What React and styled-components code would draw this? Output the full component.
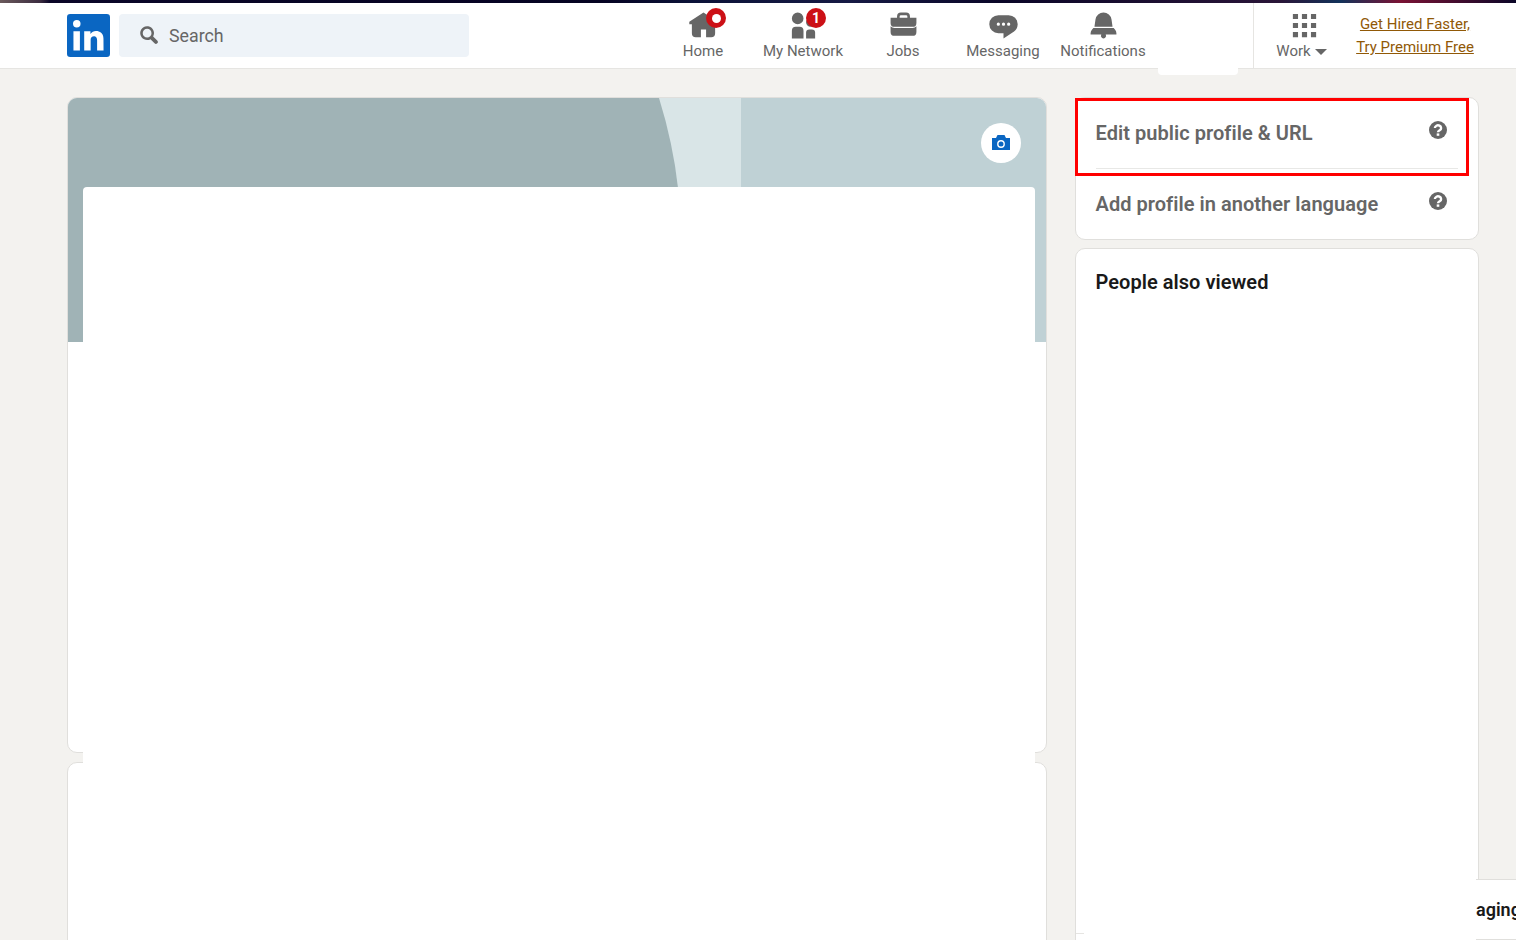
import styled, { createGlobalStyle } from "styled-components";

const GlobalStyle = createGlobalStyle`
  html, body {
    margin: 0;
    height: 940px;
    overflow: hidden;
    background: #f3f2ef;
    font-family: Roboto, "Liberation Sans", sans-serif;
  }
`;

const TopStrip = styled.div`
  height: 3px;
  background: linear-gradient(
    90deg,
    #6b5a5c 0,
    #3c2c40 40px,
    #0a0628 50px,
    #050322 600px,
    #0b1238 690px,
    #161a44 850px,
    #0a0628 1000px,
    #2a1538 1280px,
    #12325a 1340px,
    #7a1234 1400px,
    #0a0628 1516px
  );
`;

const Header = styled.header`
  position: relative;
  display: flex;
  align-items: stretch;
  height: 65px;
  padding-left: 67px;
  background: #fff;
  border-bottom: 1px solid #e6e5e2;
`;

const Logo = styled.svg`
  align-self: center;
  width: 43px;
  height: 43px;
  margin-bottom: 1px;
  fill: #0a66c2;
`;

const SearchBox = styled.div`
  display: flex;
  align-items: center;
  gap: 10px;
  align-self: center;
  box-sizing: border-box;
  width: 350px;
  height: 43px;
  margin: 0 0 1px 9px;
  padding: 1px 0 0 20px;
  background: #eef3f8;
  border-radius: 4px;
  color: #666;
  font-size: 17.8px;
`;

const SearchIcon = styled.svg`
  width: 20px;
  height: 20px;
  margin-top: -1px;
  fill: #666;
`;

const Nav = styled.nav`
  display: flex;
  margin-left: 184px;
`;

const NavItem = styled.div`
  position: relative;
  display: flex;
  flex-direction: column;
  align-items: center;
  width: 100px;
  padding-top: 7px;
  color: #666;
  font-size: 15px;
  line-height: 20px;
  white-space: nowrap;
`;

const NavIcon = styled.svg`
  display: block;
  width: 31px;
  height: 31px;
  fill: #666;
`;

const Badge = styled.span`
  position: absolute;
  top: 5px;
  left: 53px;
  display: flex;
  align-items: center;
  justify-content: center;
  width: 20px;
  height: 20px;
  border-radius: 50%;
  background: #cc1016;
  color: #fff;
  font-size: 14px;
  font-weight: 700;
  line-height: 20px;
`;

const BadgeDot = styled.span`
  width: 9px;
  height: 9px;
  border-radius: 50%;
  background: #fff;
`;

const ActiveTab = styled.div`
  position: absolute;
  left: 1158px;
  top: 60px;
  width: 80px;
  height: 12px;
  background: #fff;
  border-radius: 0 0 4px 4px;
`;

const WorkArea = styled.div`
  display: flex;
  margin-left: 100px;
  border-left: 1px solid #e6e5e2;
`;

const WorkLabel = styled.span`
  display: flex;
  align-items: center;
  gap: 4px;
  margin-left: -5px;
`;

const Caret = styled.span`
  width: 0;
  height: 0;
  margin-top: 2px;
  border-left: 6px solid transparent;
  border-right: 6px solid transparent;
  border-top: 6px solid #666;
`;

const Premium = styled.a`
  display: flex;
  flex-direction: column;
  align-items: center;
  gap: 3px;
  width: 122px;
  padding-top: 11px;
  color: #915907;
  font-size: 15px;
  line-height: 20px;
  text-decoration: underline;
  white-space: nowrap;
`;

const Main = styled.main`
  display: grid;
  grid-template-columns: 980px 404px;
  column-gap: 28px;
  padding: 28px 0 0 67px;
`;

const Column = styled.div`
  display: flex;
  flex-direction: column;
  gap: 8px;
`;

const Card = styled.section`
  position: relative;
  box-sizing: border-box;
  height: ${(props) => props.$height}px;
  background: #fff;
  border: 1px solid #e0dfdc;
  border-radius: ${(props) => (props.$open ? "10px 10px 0 0" : "10px")};
`;

const LeftColumn = styled(Column)`
  gap: 9px;
`;

const Banner = styled.svg`
  display: block;
  width: 978px;
  height: 244px;
  border-radius: 9px 9px 0 0;
`;

const CameraButton = styled.div`
  position: absolute;
  top: 25px;
  right: 25px;
  display: flex;
  align-items: center;
  justify-content: center;
  width: 40px;
  height: 40px;
  border-radius: 50%;
  background: #fff;
`;

const CameraIcon = styled.svg`
  width: 20px;
  height: 20px;
`;

const Blank = styled.div`
  position: absolute;
  top: 89px;
  left: 15px;
  width: 952px;
  height: 590px;
  background: #fff;
  border-radius: 4px 4px 0 0;
  z-index: 1;
`;

const ProfileRow = styled.div`
  display: flex;
  justify-content: space-between;
  box-sizing: border-box;
  height: ${(props) => props.$height}px;
  margin: 0 20px 0 19.5px;
  padding-top: ${(props) => props.$top}px;
  border-bottom: ${(props) => (props.$divider ? "1px solid #e8e8e6" : "none")};
  color: #666;
  font-size: 20px;
  font-weight: 600;
  letter-spacing: 0.04px;
  line-height: 26px;
`;

const HelpIcon = styled.svg`
  width: 18px;
  height: 18px;
  margin: 1px 11px 0 0;
`;

const Highlight = styled.div`
  position: absolute;
  top: 0;
  left: -1px;
  box-sizing: border-box;
  width: 394px;
  height: 78px;
  border: 3px solid #ff0000;
`;

const PeopleCard = styled(Card)`
  padding: 20px 19.5px;
  color: #191919;
  font-size: 20px;
  font-weight: 600;
  letter-spacing: 0.04px;
  line-height: 26px;

  &::after {
    content: "";
    position: absolute;
    left: 0;
    top: 684px;
    width: 8px;
    height: 1px;
    background: #e6e5e2;
  }
`;

const MessagingTab = styled.div`
  position: fixed;
  top: 879px;
  left: 1476px;
  box-sizing: border-box;
  width: 40px;
  height: 61px;
  overflow: hidden;
  background: #fff;
  border-top: 1px solid #e0dfdc;
  border-bottom: 1px solid #e0dfdc;
  color: #191919;
  font-size: 18px;
  font-weight: 600;
  line-height: 59px;
  white-space: nowrap;
`;

const navLinks = [
  {
    label: "Home",
    path: "M23 9v2h-2v7a3 3 0 01-3 3h-4v-6h-4v6H6a3 3 0 01-3-3v-7H1V9l11-7 5 3.18V2h3v5.09z",
    badge: "dot",
  },
  {
    label: "My Network",
    path: "M12 16v6H3v-6a3 3 0 013-3h3a3 3 0 013 3zm5.5-3A3.5 3.5 0 1014 9.5a3.5 3.5 0 003.5 3.5zm1 2h-2a2.5 2.5 0 00-2.5 2.5V22h7v-4.5a2.5 2.5 0 00-2.5-2.5zM7.5 2A4.5 4.5 0 1012 6.5 4.49 4.49 0 007.5 2z",
    badge: "1",
  },
  {
    label: "Jobs",
    path: "M17 6V5a3 3 0 00-3-3h-4a3 3 0 00-3 3v1H2v4a3 3 0 003 3h14a3 3 0 003-3V6zM9 5a1 1 0 011-1h4a1 1 0 011 1v1H9zm10 9a4 4 0 003-1.38V17a3 3 0 01-3 3H5a3 3 0 01-3-3v-4.38A4 4 0 005 14z",
  },
  {
    label: "Messaging",
    path: "M16 4H8a7 7 0 000 14h4v4l8.16-5.39A6.78 6.78 0 0023 11a7 7 0 00-7-7zm-8 8.25A1.25 1.25 0 119.25 11 1.25 1.25 0 018 12.25zm4 0A1.25 1.25 0 1113.25 11 1.25 1.25 0 0112 12.25zm4 0A1.25 1.25 0 1117.25 11 1.25 1.25 0 0116 12.25z",
  },
  {
    label: "Notifications",
    path: "M22 19h-8.28a2 2 0 11-3.44 0H2v-1a4.52 4.52 0 011.17-2.83l1-1.17h15.7l1 1.17A4.42 4.42 0 0122 18zM18.21 7.44A6.27 6.27 0 0012 2a6.27 6.27 0 00-6.21 5.44L5 13h14z",
  },
];

const Help = () => (
  <HelpIcon viewBox="0 0 18 18">
    <circle cx="9" cy="9" r="9" fill="#666" />
    <path
      d="M5.9 7a3.1 2.7 0 1 1 4.8 2.3c-1 .6-1.7 1-1.7 2"
      fill="none"
      stroke="#fff"
      strokeWidth="2.4"
    />
    <rect x="7.7" y="12.4" width="2.6" height="2.4" fill="#fff" />
  </HelpIcon>
);

const App = () => {
  return (
    <>
      <GlobalStyle />
      <TopStrip />
      <Header>
        <Logo viewBox="2 2 20 20">
          <path d="M20.5 2h-17A1.5 1.5 0 002 3.5v17A1.5 1.5 0 003.5 22h17a1.5 1.5 0 001.5-1.5v-17A1.5 1.5 0 0020.5 2zM8 19H5v-9h3zM6.5 8.25A1.75 1.75 0 118.3 6.5a1.78 1.78 0 01-1.8 1.75zM19 19h-3v-4.74c0-1.42-.6-1.93-1.38-1.93A1.74 1.74 0 0013 14.19a.66.66 0 000 .14V19h-3v-9h2.9v1.3a3.11 3.11 0 012.7-1.4c1.55 0 3.36.86 3.36 3.66z" />
        </Logo>
        <SearchBox>
          <SearchIcon viewBox="0 0 16 16">
            <path d="M14.56 12.44L11.3 9.18a5.51 5.51 0 10-2.12 2.12l3.26 3.26a1.5 1.5 0 102.12-2.12zM3 6.5A3.5 3.5 0 116.5 10 3.5 3.5 0 013 6.5z" />
          </SearchIcon>
          Search
        </SearchBox>
        <Nav>
          {navLinks.map((link) => (
            <NavItem key={link.label}>
              <NavIcon viewBox="0 0 24 24">
                <path d={link.path} />
              </NavIcon>
              {link.label}
              {link.badge && (
                <Badge>{link.badge === "dot" ? <BadgeDot /> : link.badge}</Badge>
              )}
            </NavItem>
          ))}
        </Nav>
        <ActiveTab />
        <WorkArea>
          <NavItem>
            <NavIcon viewBox="0 0 24 24">
              <path d="M3 3h4v4H3zm7 18h4v-4h-4zm-7 0h4v-4H3zm0-7h4v-4H3zm14-11v4h4V3zm-7 4h4V3h-4zm7 14h4v-4h-4zm-7-7h4v-4h-4zm7 0h4v-4h-4z" />
            </NavIcon>
            <WorkLabel>
              Work <Caret />
            </WorkLabel>
          </NavItem>
          <Premium>
            <span>Get Hired Faster,</span>
            <span>Try Premium Free</span>
          </Premium>
        </WorkArea>
      </Header>
      <Main>
        <LeftColumn>
          <Card $height={656}>
            <Banner viewBox="0 0 978 244">
              <rect width="978" height="244" fill="#bfd1d5" />
              <rect width="673" height="244" fill="#d9e5e7" />
              <path d="M0 0H591Q605 45 610 90V244H0Z" fill="#a0b3b6" />
            </Banner>
            <CameraButton>
              <CameraIcon viewBox="0 0 20 20">
                <path d="M1 5h4l1.5-3h7L15 5h4v12H1z" fill="#0a66c2" />
                <circle cx="10" cy="11" r="3.2" fill="none" stroke="#fff" strokeWidth="1.4" />
              </CameraIcon>
            </CameraButton>
            <Blank />
          </Card>
          <Card $height={300} $open />
        </LeftColumn>
        <Column>
          <Card $height={143}>
            <ProfileRow $height={71} $top={22} $divider>
              Edit public profile &amp; URL
              <Help />
            </ProfileRow>
            <ProfileRow $height={70} $top={22}>
              Add profile in another language
              <Help />
            </ProfileRow>
            <Highlight />
          </Card>
          <PeopleCard $height={700} $open>
            People also viewed
          </PeopleCard>
        </Column>
      </Main>
      <MessagingTab>aging</MessagingTab>
    </>
  );
};

export default App;
